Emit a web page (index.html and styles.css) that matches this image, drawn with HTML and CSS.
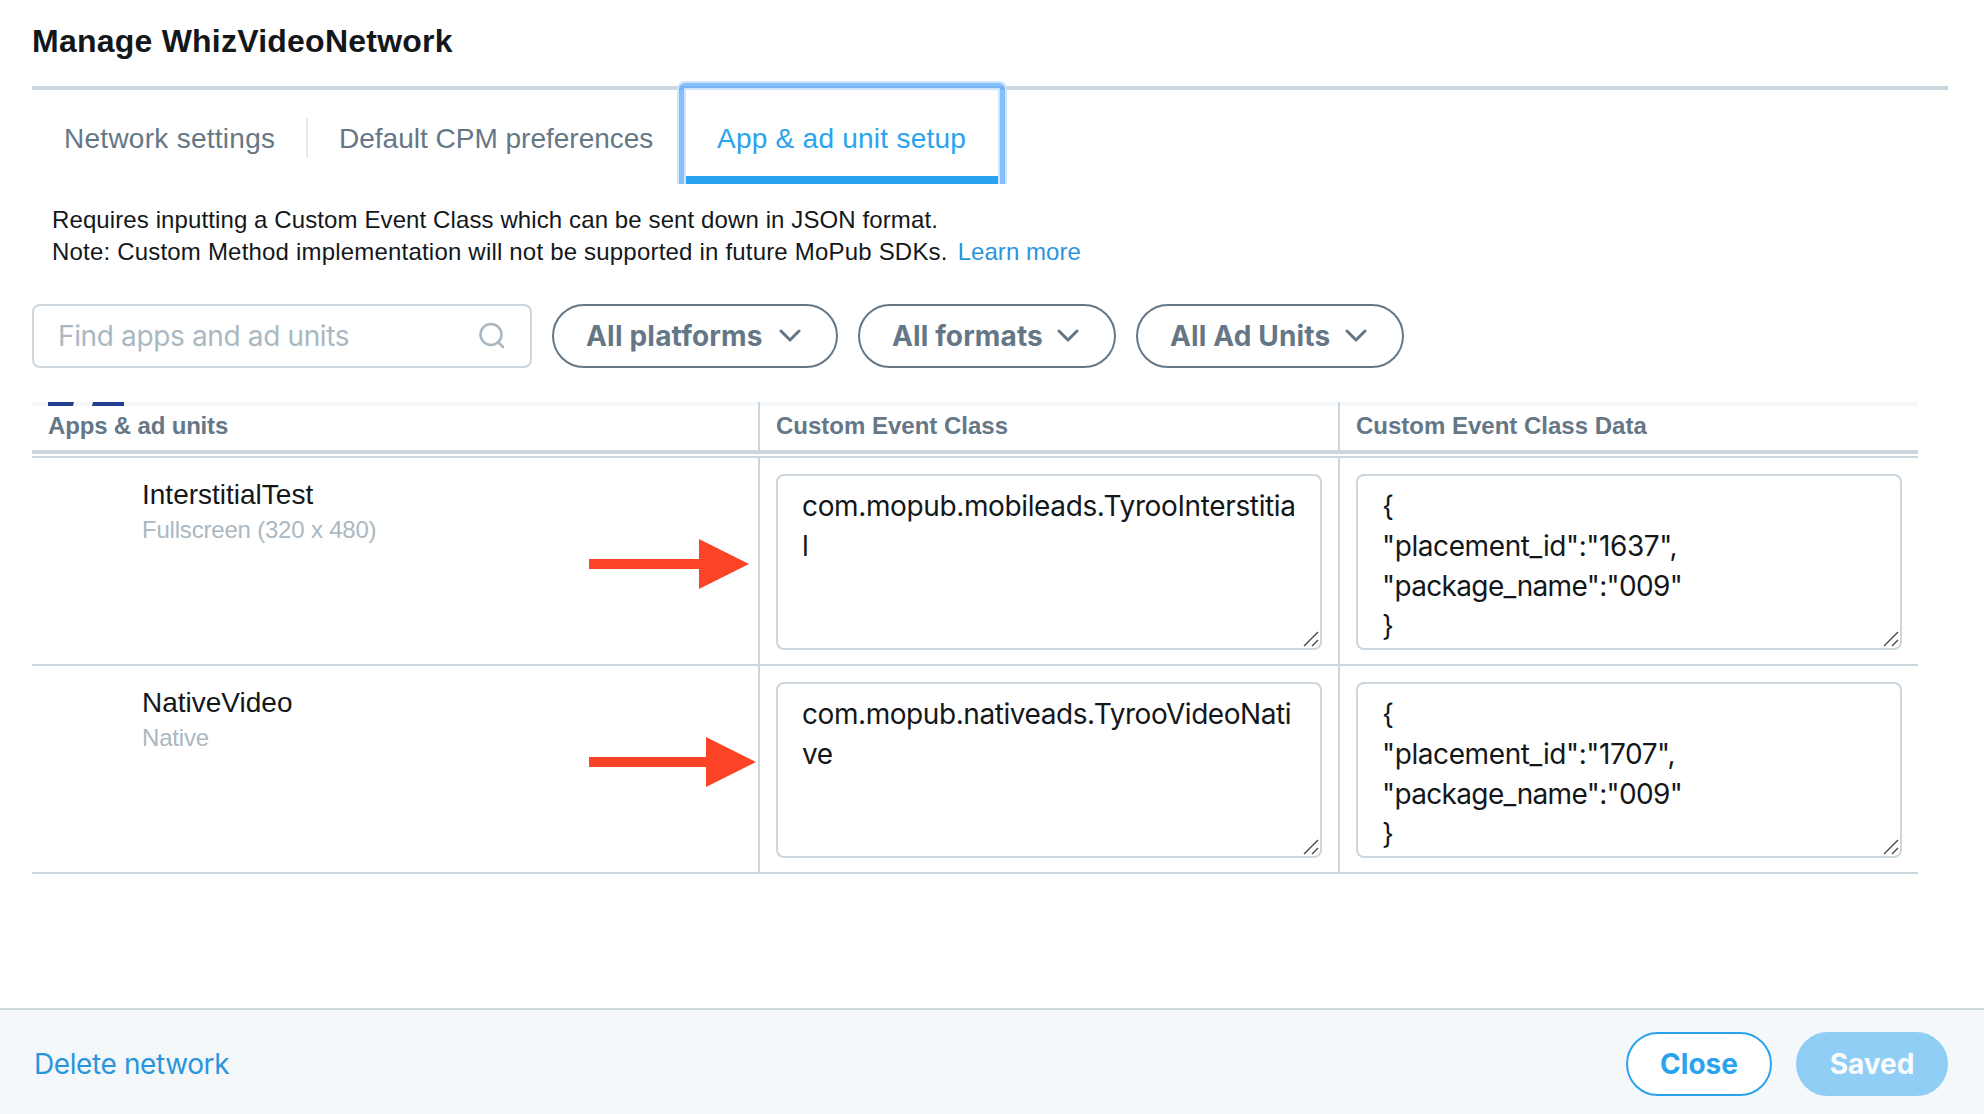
FILE: index.html
```html
<!DOCTYPE html>
<html lang="en">
<head>
<meta charset="utf-8">
<title>Manage WhizVideoNetwork</title>
<link rel="stylesheet" href="styles.css">
</head>
<body>
<div class="page">
  <header class="header"><h1 class="title">Manage WhizVideoNetwork</h1></header>
  <nav class="tabs">
    <a class="tab">Network settings</a>
    <a class="tab tab-divided">Default CPM preferences</a>
    <a class="tab tab-active">App &amp; ad unit setup</a>
  </nav>
  <div class="notice">
    <p class="notice-line">Requires inputting a Custom Event Class which can be sent down in JSON format.</p>
    <p class="notice-line notice-note">Note: Custom Method implementation will not be supported in future MoPub SDKs.<a class="learn">Learn more</a></p>
  </div>
  <div class="filters">
    <div class="search">
      <span class="placeholder">Find apps and ad units</span>
      <svg class="search-icon" width="28" height="28" viewBox="0 0 28 28"><circle cx="13" cy="12.5" r="10.5"/><path d="M20 20l5 5"/></svg>
    </div>
    <button class="pill pill-platforms"><span>All platforms</span><svg class="chevron" width="22" height="14" viewBox="0 0 22 14"><path d="M2 2l9 9 9-9"/></svg></button>
    <button class="pill pill-formats"><span>All formats</span><svg class="chevron" width="22" height="14" viewBox="0 0 22 14"><path d="M2 2l9 9 9-9"/></svg></button>
    <button class="pill pill-units"><span>All Ad Units</span><svg class="chevron" width="22" height="14" viewBox="0 0 22 14"><path d="M2 2l9 9 9-9"/></svg></button>
  </div>
  <main class="grid">
    <div class="head">
      <div class="head-cell head-units">Apps &amp; ad units
        <svg class="logo-edge" width="76" height="4" viewBox="0 0 76 4"><path d="M0 0H26L25 4H0ZM45 0H76V4H44Z"/></svg>
      </div>
      <div class="head-cell">Custom Event Class</div>
      <div class="head-cell">Custom Event Class Data</div>
    </div>
    <div class="row row-first">
      <div class="unit"><div class="unit-name">InterstitialTest</div><div class="unit-type">Fullscreen (320 x 480)</div>
        <svg class="arrow arrow-1" width="160" height="50" viewBox="0 0 160 50"><path d="M0 20H110V0L160 25 110 50V30H0Z"/></svg></div>
      <div class="cell"><div class="area">com.mopub.mobileads.TyrooInterstitia<br>l<svg class="grip" width="16" height="16" viewBox="0 0 16 16"><path d="M1 15L15 1M9 15l6-6"/></svg></div></div>
      <div class="cell"><div class="area area-data">{<br>"placement_id":"1637",<br><span class="package">"package_name":"009"</span><br>}<svg class="grip" width="16" height="16" viewBox="0 0 16 16"><path d="M1 15L15 1M9 15l6-6"/></svg></div></div>
    </div>
    <div class="row">
      <div class="unit"><div class="unit-name">NativeVideo</div><div class="unit-type">Native</div>
        <svg class="arrow arrow-2" width="167" height="50" viewBox="0 0 167 50"><path d="M0 20H117V0L167 25 117 50V30H0Z"/></svg></div>
      <div class="cell"><div class="area area-native">com.mopub.nativeads.TyrooVideoNati<br>ve<svg class="grip" width="16" height="16" viewBox="0 0 16 16"><path d="M1 15L15 1M9 15l6-6"/></svg></div></div>
      <div class="cell"><div class="area area-data">{<br>"placement_id":"1707",<br><span class="package">"package_name":"009"</span><br>}<svg class="grip" width="16" height="16" viewBox="0 0 16 16"><path d="M1 15L15 1M9 15l6-6"/></svg></div></div>
    </div>
  </main>
  <footer class="footer">
    <a class="delete">Delete network</a>
    <button class="btn btn-close">Close</button>
    <button class="btn btn-saved">Saved</button>
  </footer>
</div>
</body>
</html>
```
FILE: styles.css
```css
*, *::before, *::after { box-sizing: border-box; }
body { margin: 0; background: #fff; color: #14171a; font-family: "Liberation Sans", Arial, sans-serif; }
.page { height: 1114px; display: flex; flex-direction: column; overflow: hidden; white-space: nowrap; }
h1, p { margin: 0; font: inherit; }
button { margin: 0; font: inherit; letter-spacing: inherit; }

.header { height: 90px; margin: 0 36px 0 32px; border-bottom: 4px solid #ccd6dd; flex: none; }
.title { font-size: 32px; font-weight: bold; line-height: 82px; letter-spacing: 0.23px; }

.tabs { display: flex; height: 94px; margin-bottom: 18px; padding-left: 32px; flex: none; }
.tab { height: 94px; padding: 0 32px; font-size: 28px; line-height: 98px; color: #657786; position: relative; }
.tab:nth-child(1) { width: 275px; letter-spacing: 0.27px; }
.tab:nth-child(2) { width: 379px; }
.tab-divided::before { content: ""; position: absolute; left: -1px; top: 28px; width: 2px; height: 40px; background: #e6ecf0; }
.tab-active { width: 312px; padding-left: 31px; letter-spacing: 0.25px; color: #2aa3ef; border-bottom: 8px solid #2aa3ef; }
.tab-active::after { content: ""; position: absolute; left: -7px; right: -7px; top: -7px; height: 101px; border: 5px solid rgba(85, 164, 252, 0.7); border-bottom: 0; border-radius: 6px 6px 0 0; box-shadow: 0 0 0 2px #cfe5fe, inset 0 2px 0 #cfe5fe, inset 2px 0 0 #cfe5fe, inset -2px 0 0 #cfe5fe; clip-path: inset(-2px -2px 0 -2px); }

.notice { padding: 2px 0 0 52px; font-size: 24px; height: 102px; flex: none; }
.notice-line { line-height: 32px; letter-spacing: 0.105px; }
.notice-note { letter-spacing: 0.195px; }
.learn { color: #2b95db; margin-left: 10px; letter-spacing: 0.05px; }

.filters { display: flex; height: 64px; margin-left: 32px; flex: none; font: 28px Inter, sans-serif; letter-spacing: -0.36px; }
.search { width: 500px; border: 2px solid #ccd6dd; border-radius: 8px; padding: 0 24px; display: flex; align-items: center; justify-content: space-between; color: #aab8c2; }
.search-icon { fill: none; stroke: #aab8c2; stroke-width: 2.6; stroke-linecap: round; }
.pill { display: flex; align-items: center; justify-content: space-between; border: 2px solid #657786; border-radius: 32px; background: #fff; color: #657786; font-weight: bold; height: 64px; padding: 0 35px 0 32px; margin-left: 20px; }
.pill-platforms { width: 286px; letter-spacing: 0.2px; }
.pill-formats { width: 258px; letter-spacing: 0.12px; }
.pill-units { width: 268px; letter-spacing: 0.16px; }
.chevron { fill: none; stroke: #657786; stroke-width: 3; stroke-linecap: round; stroke-linejoin: round; }

.grid { width: 1886px; margin: 34px 0 0 32px; flex: none; }
.head, .row { display: grid; grid-template-columns: 726px 580px 580px; }
.head { height: 52px; border-top: 4px solid #f5f8fa; border-bottom: 4px solid #ccd6dd; }
.head-cell { padding-left: 16px; font-size: 24px; font-weight: bold; line-height: 40px; color: #657786; position: relative; }
.head-units { letter-spacing: -0.17px; }
.head-cell + .head-cell { border-left: 2px solid #ccd6dd; margin-top: -4px; padding-top: 4px; }
.logo-edge { position: absolute; left: 16px; top: -4px; fill: #22408f; }
.row { height: 208px; border-bottom: 2px solid #ccd6dd; }
.row-first { height: 210px; border-top: 2px solid #ccd6dd; margin-top: 2px; }
.unit { padding: 19px 0 0 110px; position: relative; }
.unit-name { font-size: 28px; line-height: 36px; }
.unit-type { font-size: 24px; line-height: 34px; letter-spacing: -0.2px; color: #aab8c2; }
.arrow { position: absolute; left: 557px; fill: #fd4326; }
.arrow-1 { top: 81px; }
.arrow-2 { top: 71px; }
.cell { border-left: 2px solid #ccd6dd; padding: 16px; }
.area { position: relative; height: 176px; border: 2px solid #ccd6dd; border-radius: 8px; padding: 10px 24px; font: 28px/40px Inter, sans-serif; letter-spacing: -0.37px; }
.area-native { letter-spacing: -0.43px; }
.area-data { letter-spacing: -0.4px; }
.package { letter-spacing: -0.65px; }
.grip { position: absolute; right: 1px; bottom: 1px; fill: none; stroke: #444; stroke-width: 1.3; }

.footer { margin-top: auto; height: 106px; border-top: 2px solid #ccd6dd; background: #f5f8fa; display: flex; align-items: center; padding: 4px 36px 0 34px; font: 28px Inter, sans-serif; }
.delete { margin-right: auto; color: #2b95db; letter-spacing: -0.4px; }
.btn { height: 64px; border-radius: 32px; font-weight: bold; border: 2px solid #2aa3ef; padding: 0; }
.btn-close { width: 146px; background: #fff; color: #2aa3ef; }
.btn-saved { width: 152px; margin-left: 24px; background: #91cef6; border-color: #91cef6; color: #fafcfe; }
```
